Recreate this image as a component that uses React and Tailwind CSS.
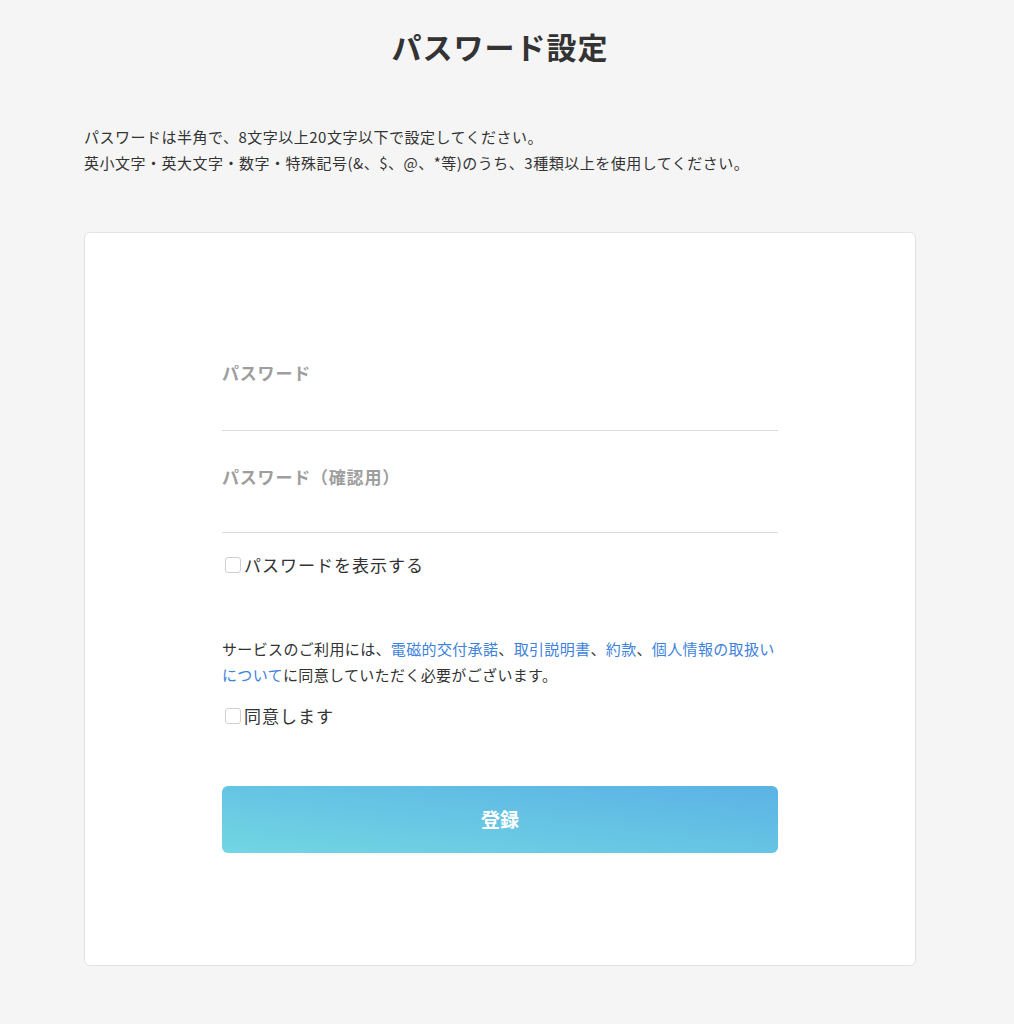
import React from 'react';

const Checkbox = ({ label }) => (
  <label className="flex items-center text-[17px] leading-6 tracking-[1px] text-[#333]">
    <span className="ml-[3px] mr-[3px] h-4 w-4 rounded-[3px] border border-[#cfcfcf] bg-white" />
    {label}
  </label>
);

const Field = ({ label, className = '', inputClass = 'h-[44px]' }) => (
  <div className={className}>
    <div className="text-[17px] font-bold leading-6 tracking-[0.8px] text-[#9e9e9e]">{label}</div>
    <div className={`${inputClass} border-b border-[#dcdcdc]`} />
  </div>
);

const Link = ({ children }) => <span className="text-[#3e82dc]">{children}</span>;

export default function App() {
  return (
    <div
      className="min-h-screen bg-[#f5f5f5] pb-[58px] pt-[26px] text-[#333]"
      style={{ fontFamily: '"Noto Sans CJK JP", "Noto Sans", sans-serif' }}
    >
      <div className="ml-[84px] w-[832px]">
        <h1 className="text-center text-[30px] font-bold leading-10 tracking-[1px] text-[#333]">
          パスワード設定
        </h1>

        <div className="mt-[58px] text-[15px] leading-[26px] tracking-[0.5px]">
          <p>パスワードは半角で、8文字以上20文字以下で設定してください。</p>
          <p>英小文字・英大文字・数字・特殊記号(&amp;、$、@、*等)のうち、3種類以上を使用してください。</p>
        </div>

        <div className="mt-[56px] rounded-[6px] border border-[#e2e2e2] bg-white pb-[112px] pt-[128px]">
          <div className="mx-auto w-[556px]">
            <Field label="パスワード" inputClass="h-[46px]" />
            <Field label="パスワード（確認用）" className="mt-[34px]" />
            <div className="mt-[20px]">
              <Checkbox label="パスワードを表示する" />
            </div>

            <p className="mt-[59px] text-[15px] leading-[26px] tracking-[0.35px]">
              サービスのご利用には、<Link>電磁的交付承諾</Link>、<Link>取引説明書</Link>、<Link>約款</Link>、<Link>個人情報の取扱いについて</Link>に同意していただく必要がございます。
            </p>
            <div className="mt-[16px]">
              <Checkbox label="同意します" />
            </div>

            <button className="mt-[58px] flex h-[67px] w-full items-center justify-center rounded-[6px] bg-gradient-to-tr from-[#72d6e2] to-[#5bb2e5] text-[19px] font-bold text-white">
              登録
            </button>
          </div>
        </div>
      </div>
    </div>
  );
}
